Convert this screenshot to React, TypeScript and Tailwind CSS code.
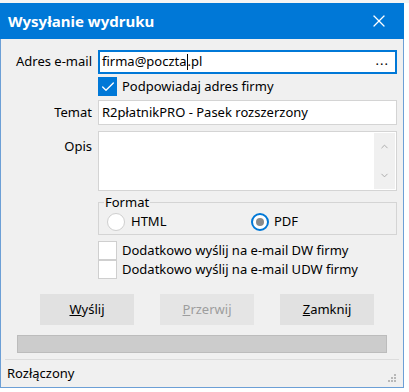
import { ChevronDown, ChevronUp, Check, X } from "lucide-react";

const font = { fontFamily: '"Segoe UI", "Noto Sans", "Open Sans", sans-serif' };

function Box({ checked }: { checked?: boolean }) {
  return checked ? (
    <span className="w-[19px] h-[19px] bg-[#0078d7] flex items-center justify-center shrink-0">
      <Check className="w-[16px] h-[16px] text-white" strokeWidth={2} />
    </span>
  ) : (
    <span className="w-[19px] h-[19px] bg-white border border-[#cfcfcf] shrink-0" />
  );
}

function Radio({ checked }: { checked?: boolean }) {
  return checked ? (
    <span className="w-[18px] h-[18px] rounded-full border-2 border-[#0078d7] bg-white flex items-center justify-center shrink-0">
      <span className="w-[8px] h-[8px] rounded-full bg-[#8a8a8a]" />
    </span>
  ) : (
    <span className="w-[18px] h-[18px] rounded-full border border-[#cfcfcf] bg-white shrink-0" />
  );
}

function Grip() {
  const dots = [
    [6, 0],
    [3, 3], [6, 3],
    [0, 6], [3, 6], [6, 6],
  ];
  return (
    <svg width="9" height="9" viewBox="0 0 9 9" className="mr-[6px]">
      {dots.map(([x, y], i) => (
        <rect key={i} x={x} y={y} width="2" height="2" fill="#b8b8b8" />
      ))}
    </svg>
  );
}

export default function App() {
  return (
    <div className="w-[409px] h-[392px] bg-white text-[13px] text-black overflow-hidden" style={font}>
      <div className="h-[3px] bg-[#f4f4f4]" />
      <div className="w-[404px] h-[385px] flex flex-col border-x border-b border-[#6c9fd6] bg-[#f0f0f0]">
        {/* title bar */}
        <div className="h-[36px] bg-[#0078d7] flex items-center text-white -mx-px">
          <span className="ml-[8px] text-[15px] font-bold">Wysyłanie wydruku</span>
          <X className="ml-auto mr-[15px] w-[20px] h-[20px]" strokeWidth={1.5} />
        </div>

        <div className="grid grid-cols-[91px_1fr] gap-x-[6px] pr-[6px] mt-[11px] items-center">
          <span className="text-right">Adres e-mail</span>
          <div className="h-[24px] border-2 border-[#0078d7] bg-white flex items-center pl-[2px] pr-[6px]">
            <span>firma@poczta</span>
            <span className="w-px h-[16px] bg-black" />
            <span>.pl</span>
            <span className="ml-auto tracking-[1px] leading-none mb-[4px]">...</span>
          </div>

          <span />
          <div className="flex items-center gap-[5px] mt-[3px] h-[19px]">
            <Box checked />
            <span>Podpowiadaj adres firmy</span>
          </div>

          <span className="text-right mt-[4px]">Temat</span>
          <div className="h-[25px] mt-[4px] border border-[#d4d4d4] bg-white flex items-center pl-[3px]">
            R2płatnikPRO - Pasek rozszerzony
          </div>

          <span className="text-right self-start mt-[12px]">Opis</span>
          <div className="h-[60px] mt-[6px] border border-[#d4d4d4] bg-white flex justify-end p-px">
            <div className="w-[21px] bg-[#f0f0f0] flex flex-col items-center justify-between py-[8px]">
              <ChevronUp className="w-[11px] h-[11px] text-[#a6a6a6]" strokeWidth={2} />
              <ChevronDown className="w-[11px] h-[11px] text-[#a6a6a6]" strokeWidth={2} />
            </div>
          </div>

          <span />
          <fieldset className="mt-[4px] h-[40px] border border-[#d4d4d4] px-[8px] flex items-center">
            <legend className="px-[1px] -ml-[3px] leading-[15px]">Format</legend>
            <div className="flex items-center w-full -mt-[1px]">
              <div className="flex items-center gap-[6px] w-[144px]">
                <Radio />
                <span>HTML</span>
              </div>
              <div className="flex items-center gap-[5px]">
                <Radio checked />
                <span>PDF</span>
              </div>
            </div>
          </fieldset>

          <span />
          <div className="flex flex-col mt-[6px]">
            <div className="flex items-center gap-[5px] h-[19px]">
              <Box />
              <span>Dodatkowo wyślij na e-mail DW firmy</span>
            </div>
            <div className="flex items-center gap-[5px] h-[19px]">
              <Box />
              <span>Dodatkowo wyślij na e-mail UDW firmy</span>
            </div>
          </div>
        </div>

        <div className="flex gap-[26px] ml-[39px] mt-[15px]">
          <button className="w-[94px] h-[31px] bg-[#e1e1e1]">
            <span className="underline">W</span>yślij
          </button>
          <button className="w-[94px] h-[31px] bg-[#e5e5e5] text-[#9d9d9d]">
            <span className="underline">P</span>rzerwij
          </button>
          <button className="w-[94px] h-[31px] bg-[#e1e1e1]">
            <span className="underline">Z</span>amknij
          </button>
        </div>

        <div className="mx-[16px] mt-[10px] h-[18px] bg-[#cccccc] border border-[#bcbcbc]" />

        <div className="mt-[6px] mx-[4px] border-t border-[#dcdcdc]" />
        <div className="flex-1 flex items-center pl-[6px]">
          <span>Rozłączony</span>
          <div className="ml-auto flex items-end h-[18px]">
            <Grip />
          </div>
        </div>
      </div>
    </div>
  );
}
